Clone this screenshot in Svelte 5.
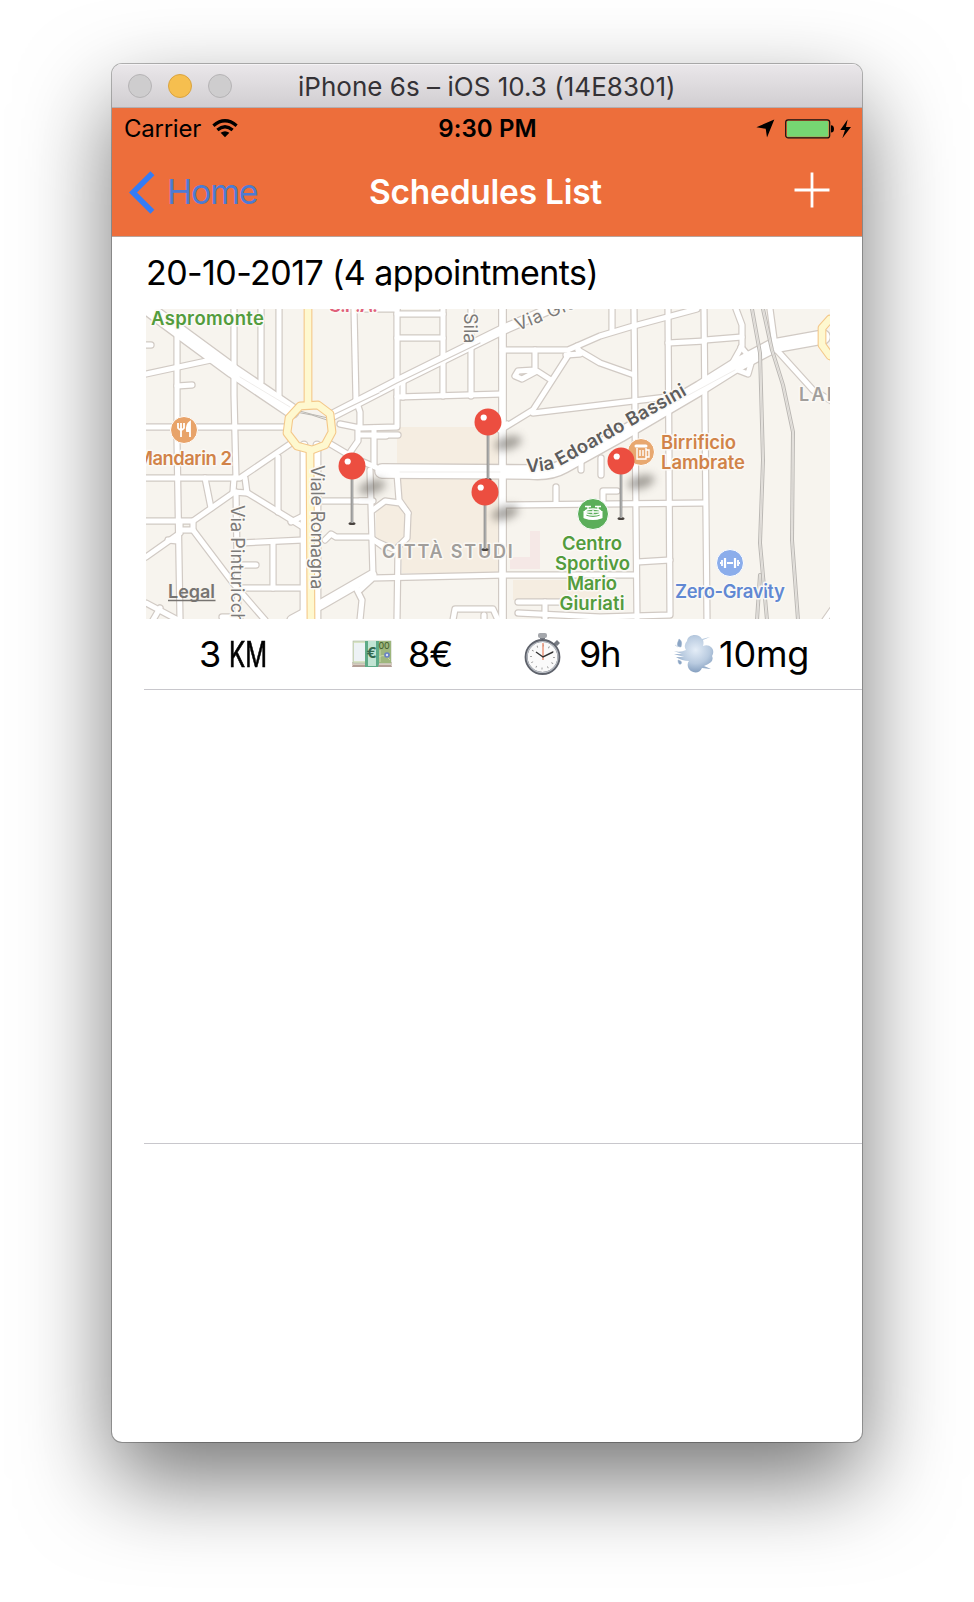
<script>
  const blocks = [
    'M397 427H500V464H397Z', 'M400 479H500V573H402V545L408 530V512L400 498Z',
    'M376 508L386 502H400L405 512V538L395 548L376 540Z', 'M513 580H600V600H513Z'
  ];
  const minor = [
    'M177 334V440L180 619', 'M234 309V395L236 478', 'M261 309V382', 'M279 309V396', 'M354 309L356 400',
    'M140 345H151', 'M146 374L211 360', 'M177 386L192 385', 'M140 427H285', 'M397 309V427L360 428L340 424',
    'M443 309V396', 'M471 309V396', 'M397 314H443', 'M397 338H443', 'M397 397L502 394',
    'M403 380V397', 'M374 428V465', 'M356 400L360 412V427', 'M374 436H386',
    'M502 350H568L600 336L630 327L697 309', 'M535 350V370L518 371L515 376L522 379L537 371L551 380',
    'M569 354L533 410L502 429', 'M578 350L600 363L634 375', 'M566 355L580 354L577 346', 'M533 413L600 405L667 397',
    'M612 309V330', 'M634 309L637 619', 'M668 309L670 615L600 617L518 613', 'M704 309L707 619',
    'M705 340L742 337', 'M668 343L705 341', 'M736 309L742 325V346L733 362', 'M741 347L752 360L748 374L735 369',
    'M775 348L813 390L835 403', 'M770 309L775 346',
    'M140 478H240L290 444', 'M205 478L211 508', 'M140 521H193L233 493', 'M234 478L233 492L247 493L245 478',
    'M236 492L238 619', 'M246 492L303 527', 'M278 457V512', 'M291 522L303 516', 'M180 521V530H193V521',
    'M146 557L180 533', 'M168 540L178 541', 'M193 530L233 583L265 620', 'M240 543L303 540', 'M273 543V588', 'M243 588H303',
    'M238 565H256', 'M146 603L178 620', 'M160 608L153 620', 'M222 617H240', 'M323 501H372', 'M325 540L331 534L336 537H370L385 548',
    'M357 590L362 600L360 620', 'M327 442L354 458L382 470', 'M358 427V441L351 451', 'M360 435H398',
    'M370 470L373 576', 'M373 510L385 501L400 503L408 513L407 538L395 550L373 540', 'M397 474L399 500L408 513', 'M398 550L397 619',
    'M360 501H373', 'M360 590L373 578L505 575H636', 'M505 505L705 503', 'M556 487V504', 'M581 455V470', 'M601 458V475',
    'M453 620L455 609H493L498 620', 'M484 620V615', 'M518 602H560', 'M545 602V618', 'M603 503V491H617', 'M637 562L670 560',
    'M500 430L507 424', 'M350 453L359 462', 'M358 309H397', 'M825 620L832 610'
  ];
  const medium = ['M333 415L397 382L502 330L550 309', 'M372 575L320 605L292 620'];
  const main = ['M146 307L233 371L292 411', 'M382 471L530 472Q550 474 564 466L620 435L700 388L735 366L773 346L823 337'];
  const rails = [
    'M752 309L760 353L763 460L760 543L767 620', 'M760 575L757 620', 'M763 309L772 350L783 385L793 432L792 540L798 620'
  ];
  const pins = [[352, 466], [488, 422], [485, 492], [621, 461]];
</script>

<div class="desktop">
  <div class="window">
    <header class="titlebar">
      <i></i><i class="amber"></i><i></i>
      <span>iPhone 6s – iOS 10.3 (14E8301)</span>
    </header>
    <div class="top">
      <div class="status">
        <div class="carrier"><span>Carrier</span>
          <svg width="26" height="19" viewBox="0 0 26 19"><g fill="none" stroke="#000" stroke-width="3.3"><path d="M1.4 6.7Q13-3.2 24.6 6.7" /><path d="M5.4 11Q13 4.6 20.6 11" /></g><path d="M8.6 13.8Q13 10.5 17.4 13.8L13 18.3Z" /></svg>
        </div>
        <b>9:30 PM</b>
        <div class="power">
          <svg width="19" height="19" viewBox="0 0 19 19"><path d="M18.3.5L11 18.6L9.7 9.7L.4 8.3Z" /></svg>
          <svg width="66" height="20" viewBox="0 0 66 20"><rect x=".7" y=".9" width="44" height="18" rx="2.5" fill="#ed6e3b" stroke="#111" stroke-width="1.2" /><rect x="2" y="2.1" width="41.4" height="15.6" rx="1" fill="#76d672" /><path d="M46 6.2Q49 6.5 49 10T46 13.5Z" /><path d="M62.6.4L55.3 11H60L57.3 19.3L66 8H61Z" /></svg>
        </div>
      </div>
      <nav>
        <div class="back"><svg width="26" height="43" viewBox="0 0 26 43"><path d="M23.4 2.3L4 21.5L23.4 40.7" fill="none" stroke="#347cf6" stroke-width="5.6" /></svg><span>Home</span></div>
        <h1>Schedules List</h1>
        <svg class="plus" width="36" height="36" viewBox="0 0 36 36"><path d="M18 .5V35.5M.5 18H35.5" stroke="#fff" stroke-width="2.8" /></svg>
      </nav>
    </div>

    <main>
      <section class="entry">
        <h2>20-10-2017 (4 appointments)</h2>
        <svg class="map" width="684" height="310" viewBox="146 309 684 310">
          <defs>
            <filter id="soft" x="-60%" y="-100%" width="220%" height="300%"><feGaussianBlur stdDeviation="4" /></filter>
            <path id="bassini" d="M526 472Q551 472 564 464L625 430L702 386" />
          </defs>
          <rect x="146" y="309" width="684" height="310" fill="#f7f4ee" />
          {#each blocks as d}<path {d} fill="#f5ede1" />{/each}
          <path d="M530 531H540V569H510V557H530Z" fill="#f5e8e6" />
          <g fill="none" stroke-linejoin="round" stroke-linecap="round">
            <g stroke="#d1cac4">
              {#each minor as d}<path {d} stroke-width="7.4" />{/each}
              <path d="M502.5 309V619M304 445V619M317 445V619" stroke-width="9" />
              {#each medium as d}<path {d} stroke-width="11.4" />{/each}
              {#each main as d}<path {d} stroke-width="16" />{/each}
            </g>
            <g stroke="#fff">
              {#each minor as d}<path {d} stroke-width="5" />{/each}
              <path d="M502.5 309V619M304 445V619M317 445V619" stroke-width="6.6" />
              {#each medium as d}<path {d} stroke-width="9" />{/each}
              {#each main as d}<path {d} stroke-width="13.4" />{/each}
            </g>
            <path d="M335 414L379 393M380 392L397 383L480 343" stroke="#d3cdc8" stroke-width="1.2" />
            <path d="M400 472H500M670 405L735 370M240 377L290 407" stroke="#e8e5e2" stroke-width=".7" />
            {#each rails as d}<path {d} stroke="#bbb8b4" stroke-width="4" /><path {d} stroke="#f0ede8" stroke-width="2" /><path {d} stroke="#c9c6c2" stroke-width=".6" />{/each}
            <path d="M296 412Q312 414 327 420M296 410Q313 415 328 418" stroke="#aaa7a2" stroke-width=".8" />
            <g stroke="#f4c88a" stroke-width="8.8"><path d="M308 303V402M310 452L311 625" /><path d="M300 406L318 405L330 414L332 432L325 445L312 450L297 446L287 433L289 418Z" /><path d="M830 319L822 328V345L830 356H850V319Z" /></g>
            <g stroke="#fef8cf" stroke-width="6.6"><path d="M308 303V402M310 452L311 625" /><path d="M300 406L318 405L330 414L332 432L325 445L312 450L297 446L287 433L289 418Z" /><path d="M830 319L822 328V345L830 356H850V319Z" /></g>
          </g>

          <g class="label">
            <text x="151" y="325" textLength="113" class="green">Aspromonte</text>
            <text x="329" y="312" textLength="49" fill="#e0607a">S.P.A.</text>
            <text x="136" y="465" textLength="96" class="orange">Mandarin 2</text>
            <text x="661" y="449" textLength="75" class="orange">Birrificio</text>
            <text x="661" y="469" textLength="84" class="orange">Lambrate</text>
            <text x="675" y="598" textLength="110" fill="#6188d3">Zero-Gravity</text>
            <g class="green" text-anchor="middle">
              <text x="592" y="550" textLength="60">Centro</text><text x="592.5" y="570" textLength="75">Sportivo</text><text x="592" y="590" textLength="50">Mario</text><text x="592" y="610" textLength="65">Giuriati</text>
            </g>
            <g fill="#a19e9b" class="district"><text x="382" y="558" textLength="133">CITTÀ STUDI</text><text x="799" y="401">LAMBRATE</text></g>
            <g fill="#7c7a78" class="street">
              <text transform="translate(464 313) rotate(90)" x="0" y="0" textLength="31">Sila</text>
              <text transform="translate(518 331) rotate(-22)" x="0" y="0">Via Giovanni</text>
              <text transform="translate(311 465) rotate(90)" x="0" y="0" textLength="125">Viale Romagna</text>
              <text class="tight" transform="translate(231 505) rotate(90)" x="0" y="0">Via Pinturicchio</text>
            </g>
            <text class="avenue"><textPath href="#bassini" textLength="181">Via Edoardo Bassini</textPath></text>
          </g>
          <g class="legal"><text x="168" y="598" textLength="47">Legal</text><path d="M168 600.5H215.500" stroke="#777471" stroke-width="1.5" /></g>

          <g stroke="#fff" stroke-width="1"><circle cx="184" cy="430" r="13.5" fill="#e8a369" /><circle cx="641" cy="452" r="13.5" fill="#e8a870" /><circle cx="593" cy="514" r="15.5" fill="#5bae5a" /><circle cx="730" cy="563" r="13.5" fill="#8badeb" /></g>
          <g fill="none" stroke="#fff" stroke-width="1.8">
            <path d="M178 423V428Q181 432 184 428V423M181 423V437" /><path d="M190 437V422Q186 425 187 431H190" fill="#fff" />
            <path d="M637 448V459H646V448M646 450H649V457H646M640 450V456M643 450V456" stroke-width="1.4" /><path d="M636 446H646" stroke-width="3" stroke-linecap="round" />
            <path d="M585 511V517Q593 520 601 517V511" stroke-width="3" /><ellipse cx="593" cy="512" rx="8" ry="3" stroke-width="1.3" /><path d="M588 506V510M598 506V510M585 506.500H591M595 506.500H601M586 512H600M593 510V514" stroke-width="1.3" />
            <path d="M727 563H733" stroke-width="2" /><path d="M725 558V568M735 558V568" stroke-width="2.2" /><path d="M722 560V566M738 560V566" /><path d="M720 563H721M739 563H740" />
          </g>

          {#each pins as [x, y]}
            <g transform="translate({x} {y})">
              <ellipse cx="20" cy="21" rx="14" ry="6.5" transform="rotate(-16 20 21)" fill="#504b45" opacity=".5" filter="url(#soft)" />
              <ellipse cx="0" cy="57.500" rx="3.5" ry="1.6" fill="#48423e" /><path d="M0 12V57" stroke="#8f8d8b" stroke-width="2.7" /><path d="M.2 12V57" stroke="#b9babb" stroke-width="1" />
              <circle r="13.5" fill="#ec4e40" /><circle cx="-4.300" cy="-4.500" r="3.100" fill="#fff" />
            </g>
          {/each}
        </svg>

        <div class="stats">
          <div class="km"><span>3</span><span class="narrow">KM</span></div>
          <div class="cash">
            <svg width="42" height="28" viewBox="0 0 42 28"><path d="M2 24H40L41 27H1Z" fill="#b39f96" /><path d="M1 22H41V25H1Z" fill="#d6ccc0" /><rect x="2" y="1" width="38" height="22" fill="#d8e3c4" stroke="#a8b5a0" stroke-width=".6" /><rect x="3" y="3" width="11" height="18" fill="#edf2f5" /><rect x="27" y="1" width="13" height="22" fill="#9eb67d" /><path d="M29 10V22M28 17Q34 13 39 20" stroke="#c9d7a8" fill="none" /><circle cx="36" cy="15" r="2.800" fill="#667fc5" /><circle cx="36" cy="15" r="1.200" fill="#dce4ee" /><path d="M14 1H28V24L27 27H14Z" fill="#5eaa87" /><path d="M17 1H25V26H17Z" fill="#c2e4d4" /><text x="15.500" y="18" font-size="15" font-weight="700" fill="#35694f">€</text><text x="27.500" y="9" font-size="9" letter-spacing="-.3" fill="#425c2c">00</text></svg>
            <span>8€</span>
          </div>
          <div class="time">
            <svg width="38" height="44" viewBox="0 0 38 44"><path d="M16 7H21V2H16ZM29 12L33 8L36 11L33 14" fill="#777b83" /><rect x="14" y="1" width="9" height="5" rx="2" fill="#a4a7ac" /><circle cx="18.500" cy="25" r="16.400" fill="#fafafa" stroke="#5e626b" stroke-width="3" /><circle cx="18.500" cy="25" r="15.500" fill="none" stroke="#b9bdc4" stroke-width="1.2" /><circle cx="18.500" cy="25" r="11.500" fill="none" stroke="#888" stroke-width="2" stroke-dasharray=".8 5.22" /><path d="M19 28V11" stroke="#ea805e" stroke-width="1.2" /><path d="M12 20L19 25L29 20" fill="none" stroke="#333" stroke-width="1.4" /></svg>
            <span>9h</span>
          </div>
          <div class="fuel">
            <svg width="41" height="42" viewBox="0 0 41 42"><defs><radialGradient id="puff" cx=".55" cy=".4" r=".6"><stop offset="0" stop-color="#e4edf7" /><stop offset=".6" stop-color="#b9cbe0" /><stop offset="1" stop-color="#86a0c0" /></radialGradient></defs><path d="M1 18Q7 20 13 17Q10 12 14 8C15 1 26 0 29 6L37 4L30 7Q31 10 30 13C37 10 43 17 39 23Q42 29 31 33L38 36L29 35C26 42 17 40 15 34Q14 30 16 28Q9 28 3 24L11 24L1 21L9 21Z" fill="url(#puff)" /><path d="M8 14C2 14 5 9 6 6Q10 8 8 14ZM2 12L5 14M5 27Q10 28 8 31Q5 32 5 27Z" fill="#8aa4c4" stroke="#9db2cc" stroke-width=".5" /></svg>
            <span>10mg</span>
          </div>
        </div>
      </section>
      <section class="blank"></section>
    </main>
  </div>
</div>

<style>
  :global(body) { background: #fff; }
  .desktop { box-sizing: border-box; width: 974px; height: 1602px; padding: 64px 112px 0; overflow: hidden; font-family: Inter, "Open Sans", sans-serif; color: #000; }
  .window { width: 750px; height: 1378px; border-radius: 10px; overflow: hidden; background: #fff; display: flex; flex-direction: column; box-shadow: 0 0 0 1px rgba(0,0,0,.27), 0 38px 90px rgba(0,0,0,.54); }
  .titlebar { height: 44px; box-sizing: border-box; border-bottom: 1px solid #b2afb2; background: linear-gradient(#eae7ea, #d1ced1); display: flex; align-items: center; padding-left: 16px; gap: 16px; flex: none; box-shadow: inset 0 1px #f5f3f5; }
  .titlebar i { width: 24px; height: 24px; box-sizing: border-box; border: 1px solid #b5b3b5; border-radius: 50%; background: #cecdce; }
  .titlebar .amber { background: #f6bf4f; border-color: #d9a33f; }
  .titlebar span { margin: 2px 0 0 50px; font-size: 26px; letter-spacing: .02px; color: #343236; white-space: nowrap; }
  .top { background: #ed6e3b; height: 128px; border-bottom: 1px solid #b9a49c; flex: none; }
  .status { height: 41px; display: grid; grid-template-columns: 1fr auto 1fr; align-items: center; padding: 0 11px 0 12px; font-size: 24px; }
  .status b { font-weight: 600; letter-spacing: .1px; }
  .carrier { display: flex; align-items: center; gap: 11px; }
  .carrier span { letter-spacing: -.25px; }
  .power { display: flex; justify-content: flex-end; align-items: center; gap: 10px; }
  nav { height: 87px; display: grid; grid-template-columns: 1fr auto 1fr; align-items: center; padding: 0 32px 0 17px; }
  .back { display: flex; align-items: center; gap: 12px; color: #4d7bd3; font-size: 34px; letter-spacing: -1.2px; }
  .back span, h1 { position: relative; top: -1px; }
  h1 { margin: 0 0 0 12px; font-size: 33.5px; font-weight: 600; letter-spacing: -.25px; color: #fff; }
  .plus { justify-self: end; margin-bottom: 5px; }
  main { flex: 1; padding-left: 32px; }
  .entry { height: 452px; border-bottom: 1px solid #c8c7cc; }
  h2 { margin: 0; padding-left: 2px; height: 72px; line-height: 71px; font-size: 34px; font-weight: 400; letter-spacing: -.58px; white-space: nowrap; }
  .map { display: block; margin-left: 2px; }
  .blank { height: 453px; border-bottom: 1px solid #c8c7cc; }
  .label text { font-size: 18.5px; font-weight: 600; paint-order: stroke; stroke: #fbf9f5; stroke-width: 3px; stroke-linejoin: round; }
  .green { fill: #539c3d; }
  .orange { fill: #d18349; }
  .label .district text { font-size: 18px; letter-spacing: 2.2px; }
  .label .street text { font-size: 18px; font-weight: 400; letter-spacing: .6px; }
  .label .street .tight { letter-spacing: .1px; }
  .label .avenue { fill: #5e5d5d; font-size: 18.5px; }
  .legal text { font-size: 18px; font-weight: 600; fill: #777471; }
  .stats { display: flex; height: 69px; align-items: center; font-size: 36px; padding-top: 1px; box-sizing: border-box; }
  .stats div { display: flex; align-items: center; box-sizing: border-box; white-space: nowrap; }
  .stats svg { flex: none; }
  .km { width: 207px; padding-left: 55px; gap: 8px; }
  .narrow { transform: scaleX(.67); transform-origin: left; -webkit-text-stroke: .7px #000; }
  .cash { width: 173px; gap: 15px; letter-spacing: -1px; }
  .time { width: 149px; gap: 17px; letter-spacing: -1px; }
  .fuel { gap: 5px; letter-spacing: -.2px; }
</style>
